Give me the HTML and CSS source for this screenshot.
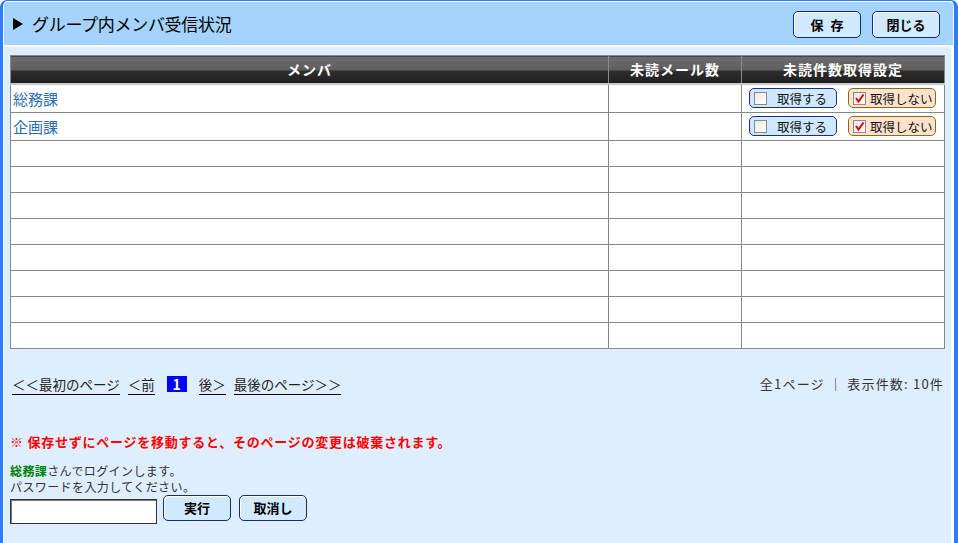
FILE: index.html
```html
<!DOCTYPE html>
<html lang="ja">
<head>
<meta charset="utf-8">
<title>グループ内メンバ受信状況</title>
<link rel="stylesheet" href="styles.css">
</head>
<body>
<div class="frame">
  <div class="titlebar">
    <h1 class="title"><svg class="tri" width="10" height="12" viewBox="0 0 10 12"><polygon points="0,0 10,6 0,12" fill="#000"/></svg>グループ内メンバ受信状況</h1>
    <div class="tbtns">
      <button class="btn wide">保 存</button>
      <button class="btn">閉じる</button>
    </div>
  </div>
  <div class="content">
    <table class="grid">
      <thead>
        <tr><th class="c1">メンバ</th><th class="c2">未読メール数</th><th class="c3">未読件数取得設定</th></tr>
      </thead>
      <tbody>
        <tr class="data">
          <td><a class="member" href="#">総務課</a></td>
          <td></td>
          <td>
            <div class="opts">
              <span class="opt get"><span class="cb"></span><span class="lbl">取得する</span></span>
              <span class="opt noget"><span class="cb"><svg width="11" height="11" viewBox="0 0 11 11"><polyline points="2,5 4.5,8.5 9.5,1.5" fill="none" stroke="#e00000" stroke-width="2"/></svg></span><span class="lbl">取得しない</span></span>
            </div>
          </td>
        </tr>
        <tr class="data">
          <td><a class="member" href="#">企画課</a></td>
          <td></td>
          <td>
            <div class="opts">
              <span class="opt get"><span class="cb"></span><span class="lbl">取得する</span></span>
              <span class="opt noget"><span class="cb"><svg width="11" height="11" viewBox="0 0 11 11"><polyline points="2,5 4.5,8.5 9.5,1.5" fill="none" stroke="#e00000" stroke-width="2"/></svg></span><span class="lbl">取得しない</span></span>
            </div>
          </td>
        </tr>
        <tr class="empty"><td></td><td></td><td></td></tr>
        <tr class="empty"><td></td><td></td><td></td></tr>
        <tr class="empty"><td></td><td></td><td></td></tr>
        <tr class="empty"><td></td><td></td><td></td></tr>
        <tr class="empty"><td></td><td></td><td></td></tr>
        <tr class="empty"><td></td><td></td><td></td></tr>
        <tr class="empty"><td></td><td></td><td></td></tr>
        <tr class="empty"><td></td><td></td><td></td></tr>
      </tbody>
    </table>

    <div class="pager">
      <div class="pages">
        <a class="pl" href="#">＜＜最初のページ</a>
        <a class="pl" href="#">＜前</a>
        <span class="cur">1</span>
        <a class="pl" href="#">後＞</a>
        <a class="pl" href="#">最後のページ＞＞</a>
      </div>
      <div class="info">全1ページ ｜ 表示件数: 10件</div>
    </div>

    <p class="warn">※ 保存せずにページを移動すると、そのページの変更は破棄されます。</p>

    <p class="login"><span class="who">総務課</span>さんでログインします。<br>パスワードを入力してください。</p>

    <div class="form">
      <input class="pw" type="password">
      <button class="btn">実行</button>
      <button class="btn">取消し</button>
    </div>
  </div>
</div>
</body>
</html>
```

FILE: styles.css
```css
html, body {
  margin: 0;
  padding: 0;
  background: #ffffff;
}
body {
  font-family: "Noto Sans CJK JP", "Noto Sans", sans-serif;
  color: #222;
  width: 958px;
  height: 543px;
  overflow: hidden;
}
.frame {
  box-sizing: border-box;
  width: 958px;
  height: 543px;
  border-left: 3px solid #2c7bff;
  border-right: 4px solid #2c7bff;
  border-top: 1px solid #2c7bff;
  border-radius: 7px 7px 0 0;
  padding: 1px 1px 0 1px;
  background: #ffffff;
  display: flex;
  flex-direction: column;
}
.titlebar {
  height: 43px;
  background: #a4d3fe;
  border-radius: 4px 4px 0 0;
  display: flex;
  align-items: center;
  justify-content: space-between;
  margin-bottom: 2px;
  padding: 0 13px 0 9px;
}
.title {
  margin: 0;
  font-size: 17px;
  font-weight: normal;
  color: #000;
  display: flex;
  align-items: center;
  letter-spacing: -0.3px;
}
.tri {
  margin-right: 9px;
}
.tbtns {
  display: flex;
  gap: 11px;
  padding-top: 1px;
}
.btn {
  box-sizing: border-box;
  width: 68px;
  height: 27px;
  background: #d2eaff;
  border: 1px solid #1b2a78;
  border-radius: 5px;
  box-shadow: inset 1px 1px 0 #ffffff;
  font-family: "Noto Sans CJK JP", sans-serif;
  font-weight: bold;
  font-size: 13px;
  color: #000;
  padding: 0;
  line-height: 1;
}
.btn.wide {
  letter-spacing: 2px;
  padding-left: 2px;
}
.content {
  flex: 1;
  background: #dfeeff;
  padding: 8px 8px 0 6px;
  margin-right: 2px;
}
.grid {
  width: 935px;
  border-collapse: collapse;
  border: 1px solid #888;
  background: #ffffff;
}
.grid th {
  height: 28px;
  padding: 0;
  box-sizing: border-box;
  background: linear-gradient(#6c6c6c, #5e5e5e 50%, #2f2f2f 52%, #1e1e1e);
  color: #fff;
  font-size: 14px;
  font-weight: bold;
  letter-spacing: 1px;
  border-left: 1px solid #8a8a8a;
  border-bottom: 2px solid #c8c8c8;
}
.grid th.c1 { width: 599px; }
.grid th.c2 { width: 133px; }
.grid th.c3 { width: 203px; }
.grid td {
  padding: 0;
  border: 1px solid #888;
}
.grid tr.data td { height: 27px; }
.grid tr.empty td { height: 25px; }
.member {
  color: #2b6cb2;
  text-decoration: none;
  font-size: 15px;
  padding-left: 2px;
}
.opts {
  display: flex;
  gap: 11px;
  padding-left: 7px;
}
.opt {
  box-sizing: border-box;
  width: 88px;
  height: 20px;
  border-radius: 5px;
  display: flex;
  align-items: center;
  font-size: 12.5px;
  color: #111;
}
.opt.get {
  background: #cde8ff;
  border: 1px solid #1a2f8a;
}
.opt.noget {
  background: #ffe2cd;
  border: 1px solid #8d6b12;
}
.cb {
  box-sizing: border-box;
  width: 13px;
  height: 13px;
  border: 1px solid #8a8a8a;
  background: linear-gradient(135deg, #e8e8e8, #ffffff);
  margin-left: 4px;
  display: flex;
  align-items: center;
  justify-content: center;
}
.opt.get .lbl { margin-left: 10px; }
.opt.noget .lbl { margin-left: 4px; }
.pager {
  display: flex;
  justify-content: space-between;
  align-items: flex-start;
  margin-top: 27px;
  padding-left: 2px;
  height: 20px;
}
.pages {
  display: flex;
  gap: 8px;
  align-items: flex-start;
}
.pl {
  color: #222;
  text-decoration: none;
  font-size: 13.5px;
  line-height: 16px;
  border-bottom: 1px solid #000;
  padding-bottom: 2px;
}
.cur {
  background: #0000ff;
  color: #fff;
  font-weight: bold;
  font-size: 14px;
  line-height: 16px;
  width: 20px;
  text-align: center;
  margin: 0 4px;
}
.info {
  font-size: 13px;
  line-height: 16px;
  color: #333;
  letter-spacing: 1.2px;
  margin-right: -1px;
}
.warn {
  margin: 38px 0 0 0;
  font-size: 13px;
  font-weight: bold;
  line-height: 16px;
  color: #ff0000;
  letter-spacing: 0.75px;
}
.login {
  margin: 13px 0 0 0;
  font-size: 12px;
  line-height: 16px;
  color: #333;
  letter-spacing: 0.4px;
}
.who {
  color: #008000;
  font-weight: bold;
}
.form {
  display: flex;
  align-items: flex-start;
  gap: 8px;
  margin-top: 0;
}
.form .pw {
  box-sizing: border-box;
  width: 147px;
  height: 25px;
  margin-top: 4px;
  margin-right: -2px;
  border: 1px solid #333;
  box-shadow: inset 1px 1px 0 #777;
  background: #fff;
  padding: 0 2px;
}
.form .btn {
  height: 26px;
}
```
